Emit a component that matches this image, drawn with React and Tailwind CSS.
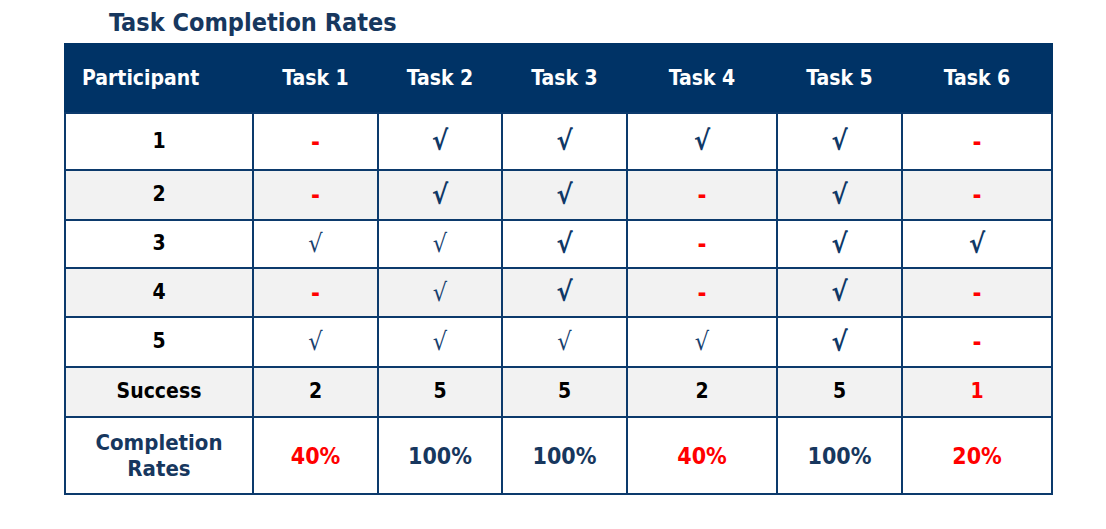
import React from "react";

const COLS = "grid grid-cols-[186px_123px_122px_123px_148px_123px_148px] gap-x-[2px] px-[2px]";
const FONT = "font-['DejaVu_Sans_Condensed','DejaVu_Sans',sans-serif]";

// B = bold check, L = light check, D = red dash
const rows = [
  { id: "1", h: "h-[55px]", bg: "bg-white", cells: ["D", "B", "B", "B", "B", "D"] },
  { id: "2", h: "h-[48px]", bg: "bg-[#f2f2f2]", cells: ["D", "B", "B", "D", "B", "D"] },
  { id: "3", h: "h-[46px]", bg: "bg-white", cells: ["L", "L", "B", "D", "B", "B"] },
  { id: "4", h: "h-[47px]", bg: "bg-[#f2f2f2]", cells: ["D", "L", "B", "D", "B", "D"] },
  { id: "5", h: "h-[48px]", bg: "bg-white", cells: ["L", "L", "L", "L", "B", "D"] },
];

function Mark({ t }) {
  if (t === "D") return <span className="text-[24px] font-bold text-[#ff0000]">-</span>;
  if (t === "B") return <span className="text-[27px] font-bold text-[#0f3866]">√</span>;
  return <span className="text-[25px] font-normal text-[#17406e]">√</span>;
}

function Cell({ children, bg, className = "" }) {
  return <div className={`${bg} flex items-center justify-center ${className}`}>{children}</div>;
}

export default function App() {
  const heads = ["Participant", "Task 1", "Task 2", "Task 3", "Task 4", "Task 5", "Task 6"];
  const success = ["2", "5", "5", "2", "5", "1"];
  const rates = ["40%", "100%", "100%", "40%", "100%", "20%"];
  return (
    <div className={`w-[1106px] h-[529px] bg-white pl-[64px] ${FONT}`}>
      <div className="h-[43px] pl-[45px] flex items-center pt-[3px] text-[25px] font-bold text-[#17375e]">
        Task Completion Rates
      </div>
      <div className="w-[989px] bg-[#0c3a6c] flex flex-col gap-[2px] pb-[2px]">
        <div className={`${COLS} h-[69px] bg-[#003366] pt-[3px]`}>
          {heads.map((h, i) => (
            <div
              key={h}
              className={`flex items-center ${i === 0 ? "justify-start pl-[16px]" : "justify-center"} text-[21px] font-bold text-white`}
            >
              {h}
            </div>
          ))}
        </div>
        {rows.map((r) => (
          <div key={r.id} className={`${COLS} ${r.h}`}>
            <Cell bg={r.bg} className="text-[21px] font-bold text-black">{r.id}</Cell>
            {r.cells.map((c, i) => (
              <Cell key={i} bg={r.bg}>
                <Mark t={c} />
              </Cell>
            ))}
          </div>
        ))}
        <div className={`${COLS} h-[48px]`}>
          <Cell bg="bg-[#f2f2f2]" className="text-[21px] font-bold text-black">Success</Cell>
          {success.map((s, i) => (
            <Cell
              key={i}
              bg="bg-[#f2f2f2]"
              className={`text-[21px] font-bold ${i === 5 ? "text-[#ff0000]" : "text-black"}`}
            >
              {s}
            </Cell>
          ))}
        </div>
        <div className={`${COLS} h-[75px]`}>
          <Cell bg="bg-white" className="text-[22px] font-bold text-[#17375e] text-center leading-[26px]">
            Completion
            <br />
            Rates
          </Cell>
          {rates.map((s, i) => (
            <Cell
              key={i}
              bg="bg-white"
              className={`text-[23px] font-bold pt-[2px] ${s === "100%" ? "text-[#17375e]" : "text-[#ff0000]"}`}
            >
              {s}
            </Cell>
          ))}
        </div>
      </div>
    </div>
  );
}
